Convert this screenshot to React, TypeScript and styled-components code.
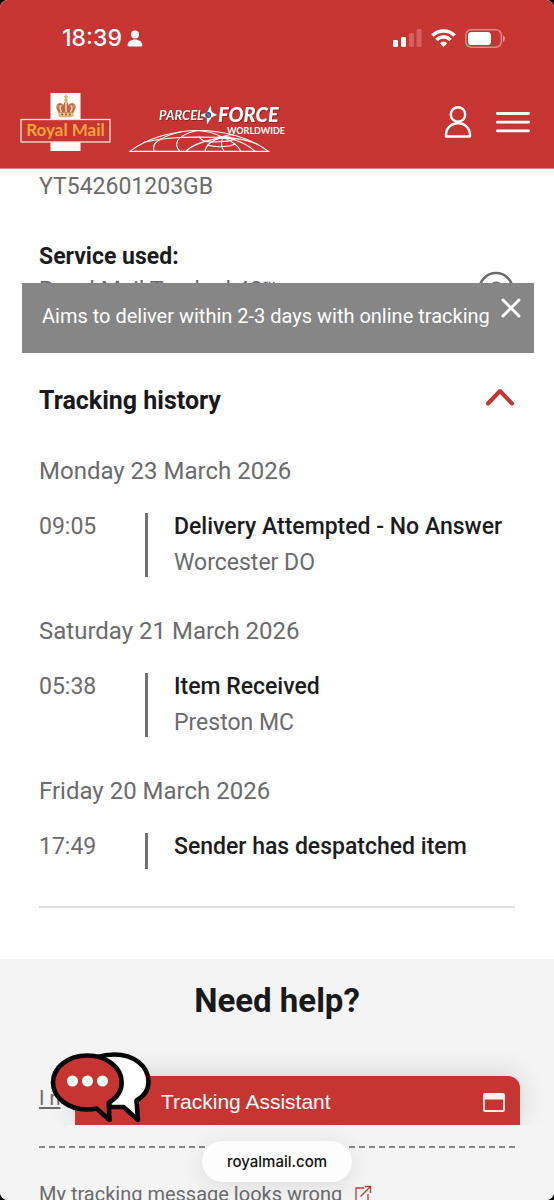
import React from "react";
import styled, { createGlobalStyle } from "styled-components";

const RED = "#c73533";
const GREY = "#6b6b6d";
const INK = "#1c1c20";

const GlobalStyle = createGlobalStyle`
  *, *::before, *::after { box-sizing: border-box; }
  body {
    margin: 0;
    background: #000;
    font-family: Roboto, "Liberation Sans", sans-serif;
    color: ${GREY};
  }
  button { font: inherit; color: inherit; background: none; border: 0; padding: 0; cursor: pointer; }
  svg { display: block; }
  h1, h2, h3, p, ol, ul, dl, dd { margin: 0; padding: 0; font-weight: 400; list-style: none; }
`;

const Screen = styled.div`
  position: relative;
  display: flex;
  flex-direction: column;
  height: 100vh;
  overflow: hidden;
  border-radius: 8px;
  background: #fff;
`;

const TopArea = styled.header`
  flex: none;
  background: ${RED};
  color: #fff;
  border-bottom: 1px solid #dc8583;
`;

const StatusBar = styled.div`
  display: flex;
  align-items: center;
  justify-content: space-between;
  height: 76px;
  padding: 0 49px 0 62px;
`;

const StatusGroup = styled.div<{ $gap: number }>`
  display: flex;
  align-items: center;
  gap: ${(p) => p.$gap}px;
`;

const Clock = styled.span`
  font: 500 23px/28px Inter, sans-serif;
`;

const NavBar = styled.nav`
  display: flex;
  align-items: center;
  justify-content: space-between;
  height: 92px;
  padding: 0 24px 0 20px;
`;

const NavGroup = styled.div<{ $gap: number }>`
  display: flex;
  align-items: center;
  gap: ${(p) => p.$gap}px;
`;

const Content = styled.main`
  flex: 1;
  min-height: 0;
  overflow: hidden;
`;

const Tracking = styled.section`
  padding: 4px 39px 51px;
`;

const Reference = styled.p`
  font-size: 23px;
  line-height: 28px;
`;

const Service = styled.div`
  position: relative;
  margin-top: 42px;
`;

const Label = styled.dt`
  font-size: 23px;
  line-height: 28px;
  font-weight: 700;
  color: ${INK};
`;

const ServiceRow = styled.dd`
  display: flex;
  align-items: flex-start;
  justify-content: space-between;
  height: 36px;
  font-size: 23px;
  line-height: 40px;
`;

const Tooltip = styled.div`
  position: absolute;
  top: 40px;
  left: -17px;
  right: -19px;
  display: flex;
  align-items: flex-start;
  justify-content: space-between;
  height: 70px;
  padding: 13px 13px 0 20px;
  background: #868686;
  color: #fff;
  font-size: 20px;
  line-height: 40px;
  white-space: nowrap;
`;

const CloseButton = styled.button`
  padding-top: 2px;
`;

const HistoryHeader = styled.h2`
  margin-top: 76px;
`;

const HistoryToggle = styled.button`
  display: flex;
  align-items: center;
  justify-content: space-between;
  width: 100%;
  height: 36px;
  font-size: 25px;
  line-height: 36px;
  font-weight: 700;
  color: #19191c;
`;

const Days = styled.ol`
  display: flex;
  flex-direction: column;
  gap: 40px;
  margin-top: 38px;
  padding-bottom: 37px;
  border-bottom: 2px solid #dedede;
`;

const DayTitle = styled.h3`
  margin-bottom: 28px;
  font-size: 24px;
  line-height: 28px;
`;

const Event = styled.div`
  display: grid;
  grid-template-columns: 106px 1fr;
  font-size: 23px;
  line-height: 28px;
`;

const EventBody = styled.div`
  min-height: 36px;
  padding-left: 26px;
  border-left: 3px solid #717173;
`;

const EventTitle = styled.p`
  font-weight: 500;
  color: ${INK};
  white-space: nowrap;
`;

const EventPlace = styled.p`
  margin-top: 8px;
`;

const Help = styled.section`
  min-height: 280px;
  padding: 22px 39px 0;
  background: #f4f4f4;
`;

const HelpTitle = styled.h2`
  margin-bottom: 63px;
  font-size: 33px;
  line-height: 40px;
  font-weight: 700;
  text-align: center;
  color: #19191c;
`;

const HelpItem = styled.li`
  height: 96px;
  padding-top: 32px;
  border-bottom: 2px dashed #858585;
  &:first-child { height: 64px; padding-top: 0; }
`;

const HelpLink = styled.a<{ $underline?: boolean }>`
  display: inline-flex;
  align-items: center;
  gap: 12px;
  font-size: 20px;
  line-height: 28px;
  color: ${GREY};
  text-decoration: ${(p) => (p.$underline ? "underline" : "none")};
  text-underline-offset: 2px;
`;

const Assistant = styled.button`
  position: absolute;
  left: 75px;
  right: 34px;
  bottom: 75px;
  display: flex;
  align-items: center;
  justify-content: space-between;
  height: 49px;
  padding: 3px 15px 0 86px;
  border-radius: 0 12px 0 0;
  background: ${RED};
  color: #fff;
  font: 21px/28px "Liberation Sans", sans-serif;
  box-shadow: 0 -2px 28px rgba(0, 0, 0, 0.14);
  clip-path: inset(-40px -40px 0 -40px);
`;

const Bubbles = styled.div`
  position: absolute;
  left: 48px;
  bottom: 75px;
  pointer-events: none;
`;

const AddressRow = styled.div`
  position: absolute;
  left: 0;
  right: 0;
  bottom: 18px;
  display: flex;
  justify-content: center;
`;

const Address = styled.button`
  height: 41px;
  padding: 0 25px;
  border-radius: 21px;
  background: #fdfdfd;
  color: #111;
  font: 500 15px/41px Inter, sans-serif;
  box-shadow: 0 4px 24px rgba(0, 0, 0, 0.1);
`;

const ContactGlyph = () => (
  <svg width="16" height="17" viewBox="0 0 16 17" fill="#fff" aria-hidden="true">
    <circle cx="8" cy="4.6" r="4" />
    <path d="M0.6 15.2C0.6 12 4 9.6 8 9.6s7.4 2.4 7.4 5.6c0 .8-.5 1.2-1.3 1.2H1.9c-.8 0-1.3-.4-1.3-1.2z" />
  </svg>
);

const SignalGlyph = () => (
  <svg width="29" height="18" viewBox="0 0 29 18" fill="#fff" aria-hidden="true">
    <rect x="0" y="11" width="5" height="7" rx="1.3" />
    <rect x="8" y="8" width="5" height="10" rx="1.3" />
    <rect x="16" y="4" width="5" height="14" rx="1.3" opacity=".22" />
    <rect x="23.5" y="0" width="5" height="18" rx="1.3" opacity=".22" />
  </svg>
);

const WifiGlyph = () => (
  <svg width="25" height="18" viewBox="0 0 25 18" aria-hidden="true">
    <g fill="none" stroke="#fff" strokeWidth="3.6">
      <path d="M1.4 6.6a15.6 15.6 0 0 1 22.2 0" />
      <path d="M5.5 11a9.8 9.8 0 0 1 14 0" />
    </g>
    <path d="M8.8 14.2a5.4 5.4 0 0 1 7.4 0L12.5 18z" fill="#fff" />
  </svg>
);

const BatteryGlyph = () => (
  <svg width="40" height="19" viewBox="0 0 40 19" aria-hidden="true">
    <rect x="0.8" y="0.8" width="35.5" height="17.4" rx="5.4" fill="none" stroke="#fff" strokeOpacity=".42" strokeWidth="1.5" />
    <rect x="3" y="3" width="23" height="13" rx="3.6" fill="#fff" />
    <path d="M38 6.3c1.2.5 1.9 1.8 1.9 3.2s-.7 2.7-1.9 3.2z" fill="#fff" opacity=".5" />
  </svg>
);

const RoyalMailLogo = () => (
  <svg width="91" height="60" viewBox="0 0 91 60" role="img" aria-label="Royal Mail">
    <rect x="30.5" y="1" width="30" height="58" fill="#fff" />
    <g stroke="#a97b52" strokeWidth=".5">
      <path d="M39 21c-3-5-3.500-9 .2-9.600 2.300-.3 3.600 1 4.300 2.200C44 11 45 9.600 46 9.600s2 1.400 2.500 4c.7-1.200 2-2.500 4.300-2.200 3.700.6 3.200 4.600.2 9.600z" fill="#c4605a" />
      <path d="M39 20.400h14v3.800c-4 1.100-10 1.100-14 0z" fill="#ecc673" />
      <path d="M41.500 20c-2-3.600-2.200-6 .1-6.400M50.500 20c2-3.600 2.200-6-.1-6.400M46 10v10" fill="none" stroke="#f3d88a" strokeWidth="1.600" />
    </g>
    <g fill="#d9ad48">
      <circle cx="46" cy="8" r="1.700" />
      <path d="M45.400 2.600h1.200v1.600h1.300v1.200h-1.300v1.600h-1.200V5.400h-1.300V4.200h1.300z" />
      <circle cx="38" cy="14" r=".9" /><circle cx="54" cy="14" r=".9" />
    </g>
    <g fill="#43538c"><circle cx="42.200" cy="22.500" r=".9" /><circle cx="49.800" cy="22.500" r=".9" /></g>
    <circle cx="46" cy="22.500" r=".9" fill="#a8322e" />
    <rect x="1" y="27.500" width="89" height="22.500" fill={RED} stroke="#ffe3d8" strokeWidth="1.300" />
    <text x="45.500" y="44" textAnchor="middle" fontFamily="Lato, sans-serif" fontSize="17" fontWeight="700" fill="#f9a13a">
      Royal Mail
    </text>
  </svg>
);

const LogoText = styled.text`
  font-family: Lato, sans-serif;
  fill: #fff;
  filter: drop-shadow(1px 1px 0 #8d2523);
`;

const ParcelforceLogo = () => (
  <svg width="156" height="60" viewBox="0 0 156 60" role="img" aria-label="Parcelforce Worldwide">
    <g fill="none" stroke="#fff" strokeWidth="1.100">
      <path d="M0.800 59.400C18 46.400 44 38.500 70 38.500s52 7.900 69.500 20.900z" />
      <path d="M14 50.500C40 44 66 45 94 45.400c14 .2 26 3.500 35 7" />
      <path d="M25.500 59.400C22 53 27 46 52 39.700" />
      <path d="M51 59.400C43 51 49 43 68 38.500c9 .5 19 3 26 6.900" />
      <path d="M76 59.400C77 53 83 48 94 45.400c-2 4-2 9 1 14" />
      <path d="M94 45.400c8 3 15 8 18 14M94 45.400c12 1 25 7 32 14M94 45.400c2-2 6-3 11-2.500M94 45.400C84 47 66 51 57 59" />
      <path d="M78 53c8 2.500 20 2.500 29-1M70 44c1 4 6 6 13 6s20-1 24-3.500" />
    </g>
    <ellipse cx="95" cy="45.400" rx="7" ry="1.700" fill="#fff" opacity=".85" />
    <path d="M81.500 12.300l1.600 7.500 6 3.200-6 2.400-5.500 8.400-.3-7.900-8.500-2.600 9-3z" fill="#fff" stroke="#7e2422" strokeWidth=".6" />
    <circle cx="79.200" cy="23" r="3" fill="#4b4f91" />
    <path d="M78 21.500l3 3" stroke="#d98a9a" strokeWidth="1" />
    <LogoText x="30" y="28" fontSize="13" fontWeight="700" fontStyle="italic">PARCEL</LogoText>
    <LogoText x="89" y="30" fontSize="20" fontWeight="900" fontStyle="italic">FORCE</LogoText>
    <text x="98" y="42" fontFamily="Lato, sans-serif" fontSize="9" fontWeight="700" fill="#fff">WORLDWIDE</text>
  </svg>
);

const AccountIcon = () => (
  <svg width="28" height="32" viewBox="0 0 28 32" fill="none" stroke="#fff" strokeWidth="2.400" strokeLinejoin="round" aria-hidden="true">
    <circle cx="14" cy="8.500" r="7.200" />
    <path d="M2 30.500C1.500 23.500 6 17.300 14 17.300S26.500 23.500 26 30.500z" />
  </svg>
);

const MenuIcon = () => (
  <svg width="34" height="22" viewBox="0 0 34 22" stroke="#fff" strokeWidth="2.800" strokeLinecap="round" aria-hidden="true">
    <path d="M1.400 2.500h31.200M1.400 11.200h31.200M1.400 19.800h31.200" />
  </svg>
);

const InfoIcon = () => (
  <svg width="38" height="36" viewBox="0 0 38 36" fill="none" stroke={GREY} strokeWidth="2.600" aria-hidden="true">
    <circle cx="19" cy="18.500" r="16.500" />
    <path d="M14 18c0-8 10-8 10-1 0 3-5 4-5 8" />
  </svg>
);

const CloseIcon = () => (
  <svg width="20" height="20" viewBox="0 0 20 20" stroke="#fff" strokeWidth="3" strokeLinecap="round" aria-hidden="true">
    <path d="M2 2l16 16M18 2L2 18" />
  </svg>
);

const ChevronIcon = () => (
  <svg width="30" height="26" viewBox="0 0 30 26" fill="none" stroke={RED} strokeWidth="4" strokeLinecap="round" strokeLinejoin="round" aria-hidden="true">
    <path d="M3 15.500L15 3l12 12.500" />
  </svg>
);

const WindowIcon = () => (
  <svg width="22" height="19" viewBox="0 0 22 19" aria-hidden="true">
    <rect x="1" y="1" width="20" height="17" rx="1" fill="none" stroke="#fff0ef" strokeWidth="1.800" />
    <path d="M1 1h20v5.500H1z" fill="#fff0ef" />
  </svg>
);

const ExternalIcon = () => (
  <svg width="18" height="18" viewBox="0 0 18 18" fill="none" stroke={RED} strokeWidth="1.300" aria-hidden="true">
    <path d="M10 3H2v14h12V9M6.500 11.500L16 2M11 1.500h5.500V8" />
  </svg>
);

const BubblesArt = () => (
  <svg width="104" height="74" viewBox="0 0 104 74" stroke="#050505" strokeWidth="4.600" strokeLinejoin="round" aria-hidden="true">
    <path d="M66 3.500C86 3.500 100.500 15 100.500 31c0 8-4 14-12 18.500L90 69 75.500 56H62L50 6c5-1.700 10-2.500 16-2.500z" fill="#fff" />
    <path d="M39.300 4.500C58.500 4.500 73.700 16.500 73.700 31.500c0 8.500-5 15.500-13 20.200L61.500 69 48.500 57.600c-3 .6-6 .9-9.200.9C20 58.500 5 46.500 5 31.500S20 4.500 39.300 4.500z" fill={RED} />
    <g fill="#fff" stroke="none">
      <circle cx="24.500" cy="30" r="5.500" />
      <circle cx="39.500" cy="30" r="5.500" />
      <circle cx="54.500" cy="30" r="5.500" />
    </g>
  </svg>
);

type Day = { date: string; time: string; title: string; place?: string };

const days: Day[] = [
  { date: "Monday 23 March 2026", time: "09:05", title: "Delivery Attempted - No Answer", place: "Worcester DO" },
  { date: "Saturday 21 March 2026", time: "05:38", title: "Item Received", place: "Preston MC" },
  { date: "Friday 20 March 2026", time: "17:49", title: "Sender has despatched item" },
];

export default function App() {
  return (
    <>
      <GlobalStyle />
      <Screen>
        <TopArea>
          <StatusBar>
            <StatusGroup $gap={5}>
              <Clock>18:39</Clock>
              <ContactGlyph />
            </StatusGroup>
            <StatusGroup $gap={9}>
              <SignalGlyph />
              <WifiGlyph />
              <BatteryGlyph />
            </StatusGroup>
          </StatusBar>
          <NavBar>
            <NavGroup $gap={18}>
              <RoyalMailLogo />
              <ParcelforceLogo />
            </NavGroup>
            <NavGroup $gap={24}>
              <button aria-label="Account"><AccountIcon /></button>
              <button aria-label="Menu"><MenuIcon /></button>
            </NavGroup>
          </NavBar>
        </TopArea>

        <Content>
          <Tracking>
            <Reference>YT542601203GB</Reference>
            <Service>
              <dl>
                <Label>Service used:</Label>
                <ServiceRow>
                  Royal Mail Tracked 48™
                  <button aria-label="Service information"><InfoIcon /></button>
                </ServiceRow>
              </dl>
              <Tooltip role="status">
                Aims to deliver within 2-3 days with online tracking
                <CloseButton aria-label="Close"><CloseIcon /></CloseButton>
              </Tooltip>
            </Service>

            <HistoryHeader>
              <HistoryToggle aria-expanded="true">
                Tracking history
                <ChevronIcon />
              </HistoryToggle>
            </HistoryHeader>

            <Days>
              {days.map((day) => (
                <li key={day.date}>
                  <DayTitle>{day.date}</DayTitle>
                  <Event>
                    <time>{day.time}</time>
                    <EventBody>
                      <EventTitle>{day.title}</EventTitle>
                      {day.place && <EventPlace>{day.place}</EventPlace>}
                    </EventBody>
                  </Event>
                </li>
              ))}
            </Days>
          </Tracking>

          <Help>
            <HelpTitle>Need help?</HelpTitle>
            <ul>
              <HelpItem>
                <HelpLink href="#help" $underline>I n</HelpLink>
              </HelpItem>
              <HelpItem>
                <HelpLink href="#message">
                  My tracking message looks wrong
                  <ExternalIcon />
                </HelpLink>
              </HelpItem>
            </ul>
          </Help>
        </Content>

        <Assistant>
          Tracking Assistant
          <WindowIcon />
        </Assistant>
        <Bubbles><BubblesArt /></Bubbles>
        <AddressRow>
          <Address>royalmail.com</Address>
        </AddressRow>
      </Screen>
    </>
  );
}
